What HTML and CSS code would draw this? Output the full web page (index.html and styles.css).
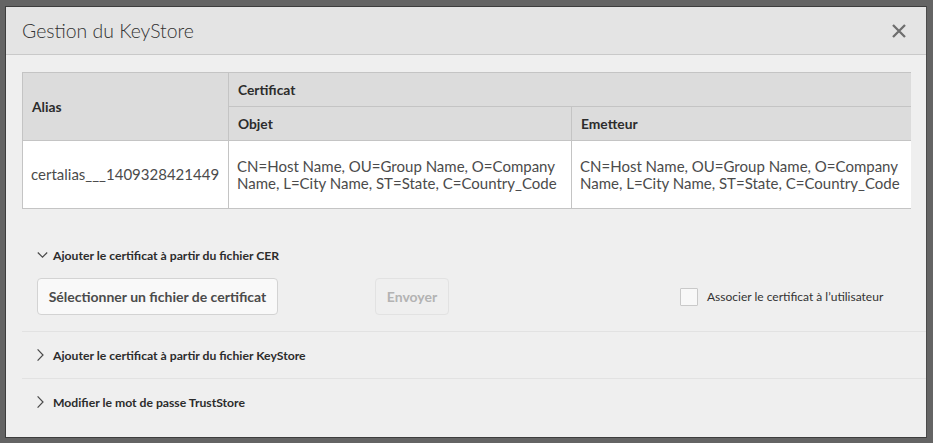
FILE: index.html
```html
<!DOCTYPE html>
<html lang="fr">
<head>
<meta charset="utf-8">
<title>Gestion du KeyStore</title>
<link rel="stylesheet" href="styles.css">
</head>
<body>
<div class="dialog">
  <header class="dialog-header">
    <h1 class="dialog-title">Gestion du KeyStore</h1>
    <button class="close-btn" type="button" aria-label="Fermer">
      <svg width="14" height="14" viewBox="0 0 14 14"><path d="M1 1L13 13M13 1L1 13" stroke="#6e6e6e" stroke-width="2.3" fill="none"/></svg>
    </button>
  </header>
  <div class="dialog-body">
    <table class="ks-table">
      <colgroup><col class="c-alias"><col class="c-obj"><col class="c-emet"></colgroup>
      <thead>
        <tr class="row-h1"><th rowspan="2" class="th-alias">Alias</th><th colspan="2" class="last">Certificat</th></tr>
        <tr class="row-h2"><th>Objet</th><th class="last">Emetteur</th></tr>
      </thead>
      <tbody>
        <tr class="row-b">
          <td>certalias___1409328421449</td>
          <td>CN=Host Name, OU=Group Name, O=Company Name, L=City Name, ST=State, C=Country_Code</td>
          <td class="last">CN=Host Name, OU=Group Name, O=Company Name, L=City Name, ST=State, C=Country_Code</td>
        </tr>
      </tbody>
    </table>

    <div class="accordion">
      <section class="acc-item open">
        <div class="acc-head">
          <span class="chev"><svg width="11" height="12" viewBox="0 0 11 12"><path d="M0.8 3.5L5.5 8.2L10.2 3.5" stroke="#4a4a4a" stroke-width="1.2" fill="none"/></svg></span>
          <span class="acc-title">Ajouter le certificat à partir du fichier CER</span>
        </div>
        <div class="acc-content">
          <button class="btn btn-select" type="button">Sélectionner un fichier de certificat</button>
          <button class="btn btn-send" type="button" disabled>Envoyer</button>
          <label class="check">
            <span class="check-box"></span>
            <span class="check-label">Associer le certificat à l’utilisateur</span>
          </label>
        </div>
      </section>
      <section class="acc-item">
        <div class="acc-head">
          <span class="chev"><svg width="11" height="12" viewBox="0 0 11 12"><path d="M0.6 0.4L6 6L0.6 11.6" stroke="#4a4a4a" stroke-width="1.2" fill="none"/></svg></span>
          <span class="acc-title">Ajouter le certificat à partir du fichier KeyStore</span>
        </div>
      </section>
      <section class="acc-item">
        <div class="acc-head">
          <span class="chev"><svg width="11" height="12" viewBox="0 0 11 12"><path d="M0.6 0.4L6 6L0.6 11.6" stroke="#4a4a4a" stroke-width="1.2" fill="none"/></svg></span>
          <span class="acc-title">Modifier le mot de passe TrustStore</span>
        </div>
      </section>
    </div>
  </div>
</div>
</body>
</html>
```

FILE: styles.css
```css
* { box-sizing: border-box; }
html, body { margin: 0; padding: 0; }
body {
  background: #646464;
  padding: 6px 6px 0 5px;
  height: 443px;
  overflow: hidden;
  font-family: Lato, "Open Sans", sans-serif;
  color: #333;
}
.dialog {
  width: 922px;
  height: 432px;
  background: #efefef;
  border: 1px solid #3d3d3d;
  border-right-color: #4a4a4a;
  display: flex;
  flex-direction: column;
  overflow: hidden;
}
.dialog-header {
  height: 48px;
  flex: none;
  background: #e4e4e4;
  border-bottom: 1px solid #c9c9c9;
  display: flex;
  align-items: center;
  justify-content: space-between;
  padding: 0 20px 0 16px;
}
.dialog-title {
  margin: 0;
  font-size: 19.4px;
  font-weight: 300;
  color: #323232;
}
.close-btn {
  border: 0;
  background: none;
  padding: 0;
  width: 14px;
  height: 14px;
  display: flex;
}
.dialog-body {
  flex: 1;
  padding: 17px 0 0 16px;
}
.ks-table {
  width: 889px;
  border-collapse: separate;
  border-spacing: 0;
  border-top: 1px solid #c4c4c4;
  border-left: 1px solid #c4c4c4;
  table-layout: fixed;
}
.c-alias { width: 206px; }
.c-obj { width: 343px; }
.c-emet { width: 339px; }
.ks-table th, .ks-table td {
  border-right: 1px solid #c4c4c4;
  border-bottom: 1px solid #c4c4c4;
  text-align: left;
  padding: 0 0 0 9px;
}
.ks-table th.last, .ks-table td.last { border-right: 0; }
.ks-table th {
  background: #dcdcdc;
  font-size: 13.8px;
  font-weight: 700;
  color: #2c2c2c;
  height: 34px;
}
.ks-table td {
  background: #fff;
  font-size: 15px;
  line-height: 17px;
  color: #4b4b4b;
  height: 68px;
  padding-left: 8px;
}
.accordion {
  margin-top: 23px;
}
.acc-item {
  border-bottom: 1px solid #e2e2e2;
}
.acc-item:last-child { border-bottom: 0; }
.acc-head {
  height: 46px;
  display: flex;
  align-items: center;
  padding-left: 15px;
}
.chev {
  width: 11px;
  height: 12px;
  display: flex;
  margin-right: 5px;
}
.acc-title {
  font-size: 12.2px;
  font-weight: 700;
  color: #2c2c2c;
}
.acc-content {
  display: flex;
  align-items: center;
  padding: 0 15px 16px;
}
.btn {
  height: 37px;
  border-radius: 4px;
  font-family: inherit;
  font-size: 14px;
  font-weight: 700;
  padding: 0 10px;
}
.btn-select {
  background: #f9f9f9;
  border: 1px solid #d3d3d3;
  color: #4b4b4b;
  width: 241px;
}
.btn-send {
  margin-left: 97px;
  background: transparent;
  border: 1px solid #e2e2e2;
  color: #b3b3b3;
  width: 74px;
}
.check {
  margin-left: 231px;
  display: flex;
  align-items: center;
}
.check-box {
  width: 18px;
  height: 18px;
  border: 1px solid #c9c9c9;
  background: #f8f8f8;
  border-radius: 1px;
  margin-right: 9px;
}
.check-label {
  font-size: 12px;
  color: #333;
}
```
